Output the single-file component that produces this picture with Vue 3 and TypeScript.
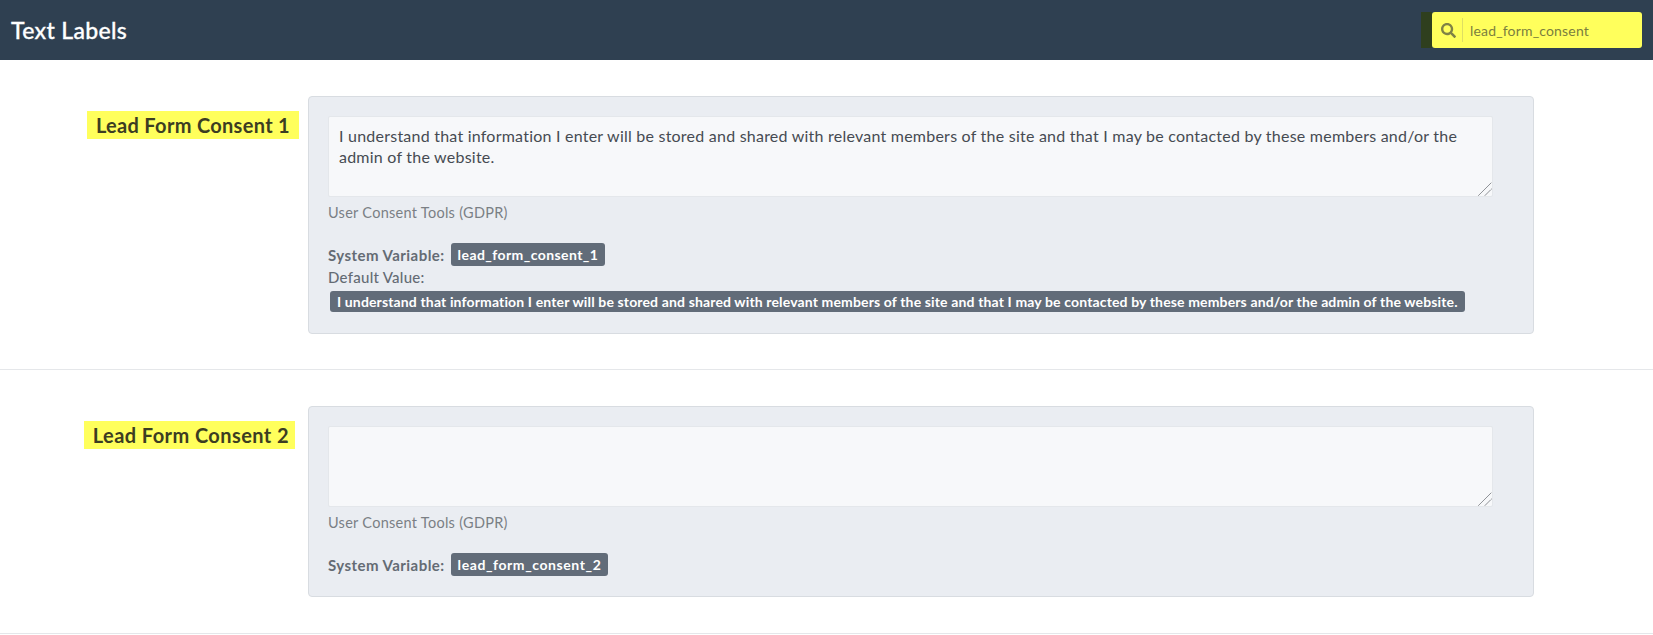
<script setup lang="ts">
interface Item {
  label: string;
  variant: string;
  value: string;
  variable: string;
  defaultValue?: string;
}
const text =
  "I understand that information I enter will be stored and shared with relevant members of the site and that I may be contacted by these members and/or the admin of the website.";
const items: Item[] = [
  { label: "Lead Form Consent 1", variant: "one", value: text, variable: "lead_form_consent_1", defaultValue: text },
  { label: "Lead Form Consent 2", variant: "two", value: "", variable: "lead_form_consent_2" },
];
</script>

<template>
  <div class="page">
    <header class="topbar">
      <h1 class="title">Text Labels</h1>
      <div class="search">
        <span class="stub"></span>
        <div class="field">
          <svg class="icon" viewBox="0 0 512 512" aria-hidden="true">
            <path d="M505 442.7L405.3 343c-4.5-4.5-10.6-7-17-7H372c27.6-35.3 44-79.7 44-128C416 93.1 322.9 0 208 0S0 93.1 0 208s93.1 208 208 208c48.3 0 92.7-16.4 128-44v16.3c0 6.4 2.5 12.5 7 17l99.7 99.7c9.4 9.4 24.6 9.4 33.9 0l28.3-28.3c9.4-9.4 9.4-24.6.1-34zM208 336c-70.7 0-128-57.2-128-128 0-70.7 57.2-128 128-128 70.7 0 128 57.2 128 128 0 70.7-57.2 128-128 128z" />
          </svg>
          <span class="sep"></span>
          <span class="query">lead_form_consent</span>
        </div>
      </div>
    </header>

    <section v-for="item in items" :key="item.variable" class="row" :class="item.variant">
      <div class="label-col">
        <label class="label">{{ item.label }}</label>
      </div>
      <div class="panel">
        <div class="input-wrap">
          <textarea class="input" :value="item.value"></textarea>
          <svg class="grip" viewBox="0 0 14 14" aria-hidden="true">
            <path d="M0.5 13.5L13.5 0.5M7 13.5L13.5 7" />
          </svg>
        </div>
        <div class="help">User Consent Tools (GDPR)</div>
        <div class="meta">
          <div class="var-line">
            <strong class="var-label">System Variable:</strong>
            <span class="badge var">{{ item.variable }}</span>
          </div>
          <template v-if="item.defaultValue">
            <div class="def-label">Default Value:</div>
            <span class="badge def">{{ item.defaultValue }}</span>
          </template>
        </div>
      </div>
    </section>
  </div>
</template>

<style>
html, body { margin: 0; background: #fff; overflow: hidden; }
</style>

<style scoped>
.page {
  font-family: Lato, "Open Sans", sans-serif;
  color: #3a3f47;
  width: 1653px;
  height: 635px;
  overflow: hidden;
}
.topbar {
  height: 60px;
  background: #2f4051;
  display: flex;
  align-items: center;
  justify-content: space-between;
  padding: 0 11px;
  box-sizing: border-box;
}
.title {
  margin: 0;
  color: #fff;
  font-size: 23px;
  font-weight: 500;
  letter-spacing: 0.33px;
  -webkit-text-stroke: 0.3px #fff;
}
.search { display: flex; height: 36px; }
.stub { width: 11px; background: #2f3f1e; }
.field {
  width: 210px;
  box-sizing: border-box;
  background: #ffff5c;
  border-radius: 3px;
  display: flex;
  align-items: center;
  padding-left: 9px;
}
.icon { width: 15px; height: 15px; fill: #7f8245; }
.sep { width: 1px; height: 24px; background: #dede62; margin: 0 7px 0 6px; }
.query { font-size: 14px; color: #7b7e3f; letter-spacing: 0.17px; }
.row {
  display: flex;
  padding: 36px 0 35px;
  border-bottom: 1px solid #e5e7ea;
}
.row.two { padding-bottom: 36px; }
.label-col {
  width: 308px;
  flex: none;
  display: flex;
  justify-content: flex-end;
  align-items: flex-start;
  padding: 15px 9px 0 0;
  box-sizing: border-box;
}
.label {
  background: #ffff5c;
  color: #3c3d22;
  font-size: 20px;
  font-weight: 700;
  line-height: 28px;
  letter-spacing: 0.31px;
  padding: 0 9px;
}
.two .label {
  padding: 0 6px 0 9px;
  margin-right: 4px;
  letter-spacing: 0.42px;
}
.panel {
  width: 1226px;
  flex: none;
  box-sizing: border-box;
  background: #eaedf2;
  border: 1px solid #d8dce1;
  border-radius: 4px;
  padding: 19px 19px 21px;
}
.two .panel { padding-bottom: 20px; }
.input-wrap { position: relative; width: 1165px; }
.input {
  display: block;
  width: 100%;
  height: 81px;
  box-sizing: border-box;
  margin: 0;
  padding: 8px 10px;
  background: #f7f8fa;
  border: 1px solid #e4e7eb;
  border-radius: 2px;
  font-family: inherit;
  font-size: 16px;
  line-height: 21px;
  color: #464b52;
  letter-spacing: 0.23px;
  outline: none;
  resize: none;
}
.grip {
  position: absolute;
  right: 1px;
  bottom: 1px;
  width: 14px;
  height: 14px;
  fill: none;
  stroke: #55595f;
  stroke-width: 1;
  stroke-dasharray: 1 0.4;
  pointer-events: none;
}
.help {
  margin-top: 6px;
  font-size: 14.5px;
  line-height: 20px;
  color: #7a7f85;
  letter-spacing: 0.28px;
}
.meta { margin-top: 20px; font-size: 15px; line-height: 22px; color: #646b74; }
.var-line { display: flex; align-items: center; gap: 6px; height: 23px; }
.var-label { font-weight: 700; letter-spacing: 0.45px; }
.def-label { letter-spacing: 0.27px; font-weight: 500; }
.badge {
  display: inline-block;
  background: #626c79;
  color: #fff;
  border-radius: 3px;
  font-weight: 700;
  font-size: 14px;
}
.var { padding: 0 7px; line-height: 23px; letter-spacing: 0.42px; }
.two .var { letter-spacing: 0.58px; }
.def { margin: 3px 0 0 2px; padding: 0 7px; line-height: 21px; letter-spacing: 0.14px; white-space: nowrap; }
</style>
